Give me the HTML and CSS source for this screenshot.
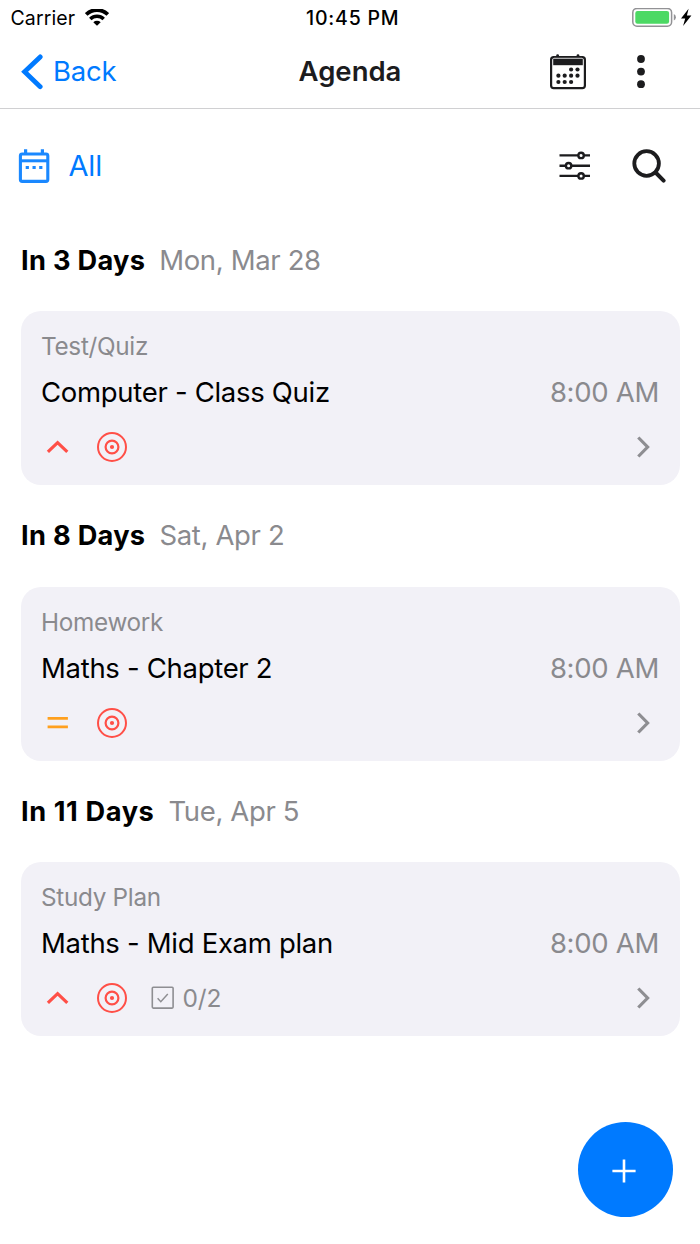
FILE: index.html
```
<!DOCTYPE html>
<html lang="en">
    <head>
        <meta charset="utf-8">
        <title>Agenda</title>
        <link rel="stylesheet" href="styles.css">
    </head>
    <body>
        <!-- shared icons -->
        <svg class="defs" width="0" height="0">
            <symbol id="high" viewBox="0 0 34 30">
                <path d="M6.9 19.9 16.6 10.6 26.3 19.9" fill="none" stroke="#ff4f47" stroke-width="3.2"/>
            </symbol>
            <symbol id="medium" viewBox="0 0 34 30">
                <path d="M6.6 10.4H26.9M6.6 18.9H26.9" fill="none" stroke="#ffa01e" stroke-width="2.7"/>
            </symbol>
            <symbol id="target" viewBox="0 0 30 30">
                <circle cx="15" cy="15" r="14" fill="none" stroke="#ff4f47" stroke-width="2"/>
                <circle cx="15" cy="15" r="6.4" fill="none" stroke="#ff4f47" stroke-width="2.2"/>
                <circle cx="15" cy="15" r="2.1" fill="#ff4f47"/>
            </symbol>
            <symbol id="next" viewBox="0 0 16 24">
                <path d="M2.3 2.5 11.6 12 2.3 21.5" fill="none" stroke="#8e8e92" stroke-width="3.2"/>
            </symbol>
        </svg>

        <div class="status">
            <div class="carrier">
                <span>Carrier</span>
                <svg width="24" height="17" viewBox="0 0 24 17">
                    <path d="M1.2 5.4A15.6 15.6 0 0 1 22.8 5.4" fill="none" stroke="#000" stroke-width="3.8"/>
                    <path d="M5.3 10A9.6 9.6 0 0 1 18.7 10" fill="none" stroke="#000" stroke-width="3.5"/>
                    <path d="M12 16.8 8.3 13.3A5.4 5.4 0 0 1 15.7 13.3Z"/>
                </svg>
            </div>
            <div class="clock">10:45 PM</div>
            <div class="battery">
                <svg width="60" height="20" viewBox="0 0 60 20">
                    <rect x="0.8" y="0.4" width="38.8" height="17.8" rx="4.2" fill="none" stroke="#929295" stroke-width="1.5"/>
                    <rect x="3.3" y="2.9" width="33.8" height="12.8" rx="2.2" fill="#4cd964"/>
                    <path d="M41.8 6Q43.9 7 43.9 9.3T41.8 12.6Z" fill="#929295"/>
                    <path d="M56.6 0.8 49 10.6H53.2L51.1 18 59.4 7.6H54.9Z"/>
                </svg>
            </div>
        </div>

        <div class="nav">
            <div class="back">
                <svg width="22" height="36" viewBox="0 0 22 36">
                    <path d="M19.2 2.9 3.6 17.8 19.2 32.7" fill="none" stroke="#007aff" stroke-width="4.8" stroke-linecap="round" stroke-linejoin="miter"/>
                </svg>
                <span>Back</span>
            </div>
            <div class="heading">Agenda</div>
            <div class="actions">
                <svg width="36" height="36" viewBox="0 0 36 36" fill="#1c1c1e">
                    <rect x="1.1" y="3.2" width="33.8" height="31" rx="2.6" fill="none" stroke="#1c1c1e" stroke-width="2.2"/>
                    <path d="M4 4.2H32" stroke="#a0a0a2" stroke-width="1"/>
                    <path d="M3.2 5H32.8V11.2H3.2Z"/>
                    <path d="M6.2 2.6V1.6A1.4 1.4 0 0 1 9 1.6V2.6ZM26.6 2.6V1.6A1.4 1.4 0 0 1 29.4 1.6V2.6Z"/>
                    <circle cx="21.1" cy="15.5" r="2.1"/><circle cx="27.5" cy="15.5" r="2.1"/>
                    <circle cx="8.4" cy="21.7" r="2.1"/><circle cx="14.7" cy="21.7" r="2.1"/><circle cx="21.1" cy="21.7" r="2.1"/><circle cx="27.5" cy="21.7" r="2.1"/>
                    <circle cx="8.4" cy="28" r="2.1"/><circle cx="14.7" cy="28" r="2.1"/><circle cx="21.1" cy="28" r="2.1"/>
                </svg>
                <svg width="8" height="36" viewBox="0 0 8 36" fill="#1c1c1e">
                    <circle cx="4" cy="5" r="3.9"/><circle cx="4" cy="17.6" r="3.9"/><circle cx="4" cy="30.2" r="3.9"/>
                </svg>
            </div>
        </div>

        <div class="filter">
            <div class="range">
                <svg width="32" height="36" viewBox="0 0 32 36">
                    <path d="M7.6 1.2V7M24.4 1.2V7" stroke="#1a88ff" stroke-width="3.2"/>
                    <rect x="2.4" y="6" width="27.4" height="27.4" rx="1.8" fill="none" stroke="#1a88ff" stroke-width="3.1"/>
                    <path d="M2 12.8H30" stroke="#1a88ff" stroke-width="3"/>
                    <path d="M7.7 19.5H10.9M14.5 19.5H17.7M21.2 19.5H24.4" stroke="#1a88ff" stroke-width="3.2"/>
                </svg>
                <span>All</span>
            </div>
            <div class="tools">
                <svg width="32" height="30" viewBox="0 0 32 30" fill="#fff" stroke="#1c1c1e" stroke-width="2.4">
                    <path d="M.5 4.4H31M.5 14.7H31M.5 24.9H31"/>
                    <circle cx="22.1" cy="4.4" r="2.7"/><circle cx="9.6" cy="14.7" r="2.7"/><circle cx="22.1" cy="24.9" r="2.7"/>
                </svg>
                <svg width="34" height="34" viewBox="0 0 34 34" fill="none" stroke="#1c1c1e">
                    <circle cx="14.6" cy="14.5" r="12.3" stroke-width="3.8"/>
                    <path d="M23.6 23.5 31.6 31.6" stroke-width="4" stroke-linecap="round"/>
                </svg>
            </div>
        </div>

        <div class="day">
            <div class="date"><b>In 3 Days</b><span>Mon, Mar 28</span></div>
            <div class="card">
                <div class="type">Test/Quiz</div>
                <div class="title">
                    <span>Computer - Class Quiz</span>
                    <span class="time">8:00 AM</span>
                </div>
                <div class="info">
                    <svg class="priority"><use href="#high"/></svg>
                    <svg class="target"><use href="#target"/></svg>
                    <svg class="next"><use href="#next"/></svg>
                </div>
            </div>
        </div>

        <div class="day">
            <div class="date"><b>In 8 Days</b><span>Sat, Apr 2</span></div>
            <div class="card">
                <div class="type">Homework</div>
                <div class="title">
                    <span>Maths - Chapter 2</span>
                    <span class="time">8:00 AM</span>
                </div>
                <div class="info">
                    <svg class="priority"><use href="#medium"/></svg>
                    <svg class="target"><use href="#target"/></svg>
                    <svg class="next"><use href="#next"/></svg>
                </div>
            </div>
        </div>

        <div class="day">
            <div class="date"><b class="wide">In 11 Days</b><span>Tue, Apr 5</span></div>
            <div class="card">
                <div class="type">Study Plan</div>
                <div class="title">
                    <span>Maths - Mid Exam plan</span>
                    <span class="time">8:00 AM</span>
                </div>
                <div class="info">
                    <svg class="priority"><use href="#high"/></svg>
                    <svg class="target"><use href="#target"/></svg>
                    <svg class="check" width="24" height="24" viewBox="0 0 24 24" fill="none" stroke="#8e8e92">
                        <rect x="1.3" y="1.3" width="20.8" height="20.8" rx="1" stroke-width="1.6"/>
                        <path d="M6.6 12.3 9.8 15.7 16.8 8.1" stroke-width="1.5"/>
                    </svg>
                    <span class="count">0/2</span>
                    <svg class="next"><use href="#next"/></svg>
                </div>
            </div>
        </div>

        <!-- floating add button -->
        <div class="add">
            <svg width="24" height="24" viewBox="0 0 24 24">
                <path d="M0.4 12H23.6M12 0.4V23.6" stroke="#fff" stroke-width="2.6"/>
            </svg>
        </div>
    </body>
</html>
```
FILE: styles.css
```
body {
    margin: 0;
    height: 1244px;
    overflow: hidden;
    background-color: #fff;
    color: #000;
    font-family: Inter, "Liberation Sans", sans-serif;
    font-size: 27.5px;
}

svg {
    display: block;
    flex: none;
}

.defs {
    position: absolute;
}

span, b, .clock, .heading, .type {
    white-space: nowrap;
}

.status {
    display: grid;
    grid-template-columns: 1fr auto 1fr;
    align-items: center;
    height: 36px;
    padding: 0 8px 0 10.5px;
    font-size: 19.5px;
}

.carrier {
    display: flex;
    align-items: center;
    gap: 10px;
    letter-spacing: 0.1px;
}

.carrier svg {
    margin-bottom: 1px;
}

.clock {
    font-weight: 500;
    letter-spacing: 0.8px;
    margin-left: 3px;
}

.battery {
    justify-self: end;
}

.nav {
    display: grid;
    grid-template-columns: 1fr auto 1fr;
    align-items: center;
    height: 72px;
    padding: 0 55px 0 21px;
    border-bottom: 1px solid #d0d0d2;
}

.back {
    display: flex;
    align-items: center;
    gap: 10px;
    color: #007aff;
    letter-spacing: -0.2px;
}

.back span, .heading {
    padding-bottom: 2px;
}

.heading {
    color: #1c1c1e;
    font-weight: 600;
    margin-left: 34px;
}

.actions {
    display: flex;
    justify-content: flex-end;
    gap: 51px;
}

.filter {
    display: flex;
    justify-content: space-between;
    align-items: center;
    height: 87.5px;
    padding: 13px 34px 0 18px;
}

.range {
    display: flex;
    align-items: center;
    gap: 18.5px;
    color: #007aff;
    font-size: 29px;
    letter-spacing: -0.2px;
}

.tools {
    display: flex;
    align-items: center;
    gap: 41px;
}

.date {
    display: flex;
    align-items: baseline;
    box-sizing: border-box;
    gap: 14px;
    height: 101.5px;
    line-height: 101.5px;
    padding-left: 21px;
    letter-spacing: -0.35px;
}

.date b {
    font-size: 27.2px;
    font-weight: 700;
    letter-spacing: 0.3px;
}

.date .wide {
    letter-spacing: 0.6px;
}

.date span {
    color: #8a8a8e;
}

.card {
    box-sizing: border-box;
    height: 174px;
    margin: 0 20.5px;
    padding: 18px 20.5px 0;
    background-color: #f2f1f7;
    border-radius: 20px;
}

.type {
    height: 36px;
    line-height: 35px;
    font-size: 24.3px;
    letter-spacing: -0.3px;
    color: #8a8a8e;
}

.title {
    display: flex;
    justify-content: space-between;
    height: 54px;
    line-height: 54px;
    letter-spacing: -0.3px;
}

.time {
    color: #8a8a8e;
}

.info {
    display: flex;
    align-items: center;
    height: 56px;
}

.priority {
    width: 34px;
    height: 30px;
}

.target {
    width: 30px;
    height: 30px;
    margin-left: 21.5px;
}

.check {
    margin-left: 24px;
}

.count {
    margin-left: 8px;
    font-size: 24.5px;
    letter-spacing: -0.2px;
    color: #8a8a8e;
}

.next {
    width: 16px;
    height: 24px;
    margin-left: auto;
    margin-right: 7.5px;
}

.add {
    position: fixed;
    right: 27px;
    bottom: 27px;
    display: flex;
    justify-content: center;
    align-items: center;
    box-sizing: border-box;
    width: 95px;
    height: 95px;
    padding: 2px 4px 0 0;
    background-color: #007aff;
    border-radius: 50%;
}
```
